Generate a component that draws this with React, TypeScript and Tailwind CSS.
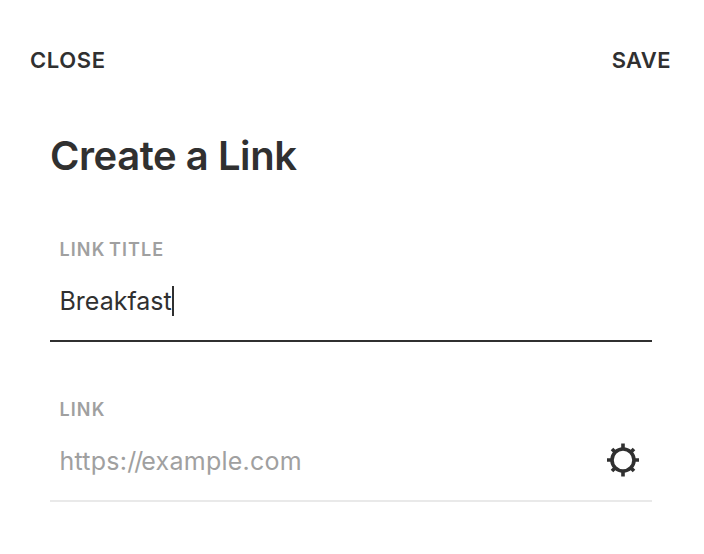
import React from "react";

const SettingsIcon: React.FC = () => {
  return (
    <svg
      width="32"
      height="34"
      viewBox="0 0 32 34"
      fill="none"
      stroke="#303030"
      strokeWidth="3.6"
    >
      <circle cx="16" cy="17" r="11" />
      <path d="M16 0.5v5M16 28.5v5M0 17h5M27 17h5" />
      <path d="M5 6l3.5 3.5M27 6l-3.5 3.5M5 28l3.5-3.5M27 28l-3.5-3.5" />
    </svg>
  );
};

const App: React.FC = () => {
  return (
    <div className="w-full h-[554px] overflow-hidden bg-white font-['Inter','Liberation_Sans',sans-serif] text-[#303030]">
      {/* Header */}
      <header className="flex items-center justify-between pt-11 pl-[30px] pr-[33px]">
        <button className="h-8 text-[22px] leading-8 font-semibold tracking-[0.6px]">
          CLOSE
        </button>
        <button className="h-8 text-[22px] leading-8 font-semibold tracking-[0.4px]">
          SAVE
        </button>
      </header>

      {/* Form */}
      <main className="pl-[50px] pr-[52px] pt-14">
        <h1 className="h-12 text-[40px] leading-12 font-semibold tracking-[-0.45px] whitespace-nowrap">
          Create a Link
        </h1>

        <div className="mt-[58px] h-[104px] border-b-2 border-[#303030] pl-[9.5px]">
          <p className="h-6 text-lg leading-6 font-semibold tracking-[1.1px] [word-spacing:-2px] text-[#a0a0a0]">
            LINK TITLE
          </p>
          <div className="mt-[23px] flex h-8 items-center">
            <span className="text-[25px] leading-8">Breakfast</span>
            <span className="h-[30px] w-0.5 bg-[#303030]" />
          </div>
        </div>

        <div className="mt-14 h-[104px] border-b-2 border-[#e9e9e9] pl-[9.5px]">
          <p className="h-6 text-lg leading-6 font-semibold tracking-[1.1px] text-[#a0a0a0]">
            LINK
          </p>
          <div className="mt-[23px] flex h-8 items-center justify-between pr-[13px]">
            <span className="text-[25px] leading-8 tracking-[0.25px] text-[#a0a0a0]">
              https:<span className="tracking-[-2px]">//</span>example.com
            </span>
            <button aria-label="Link settings" className="-mt-0.5">
              <SettingsIcon />
            </button>
          </div>
        </div>
      </main>
    </div>
  );
};

export default App;
